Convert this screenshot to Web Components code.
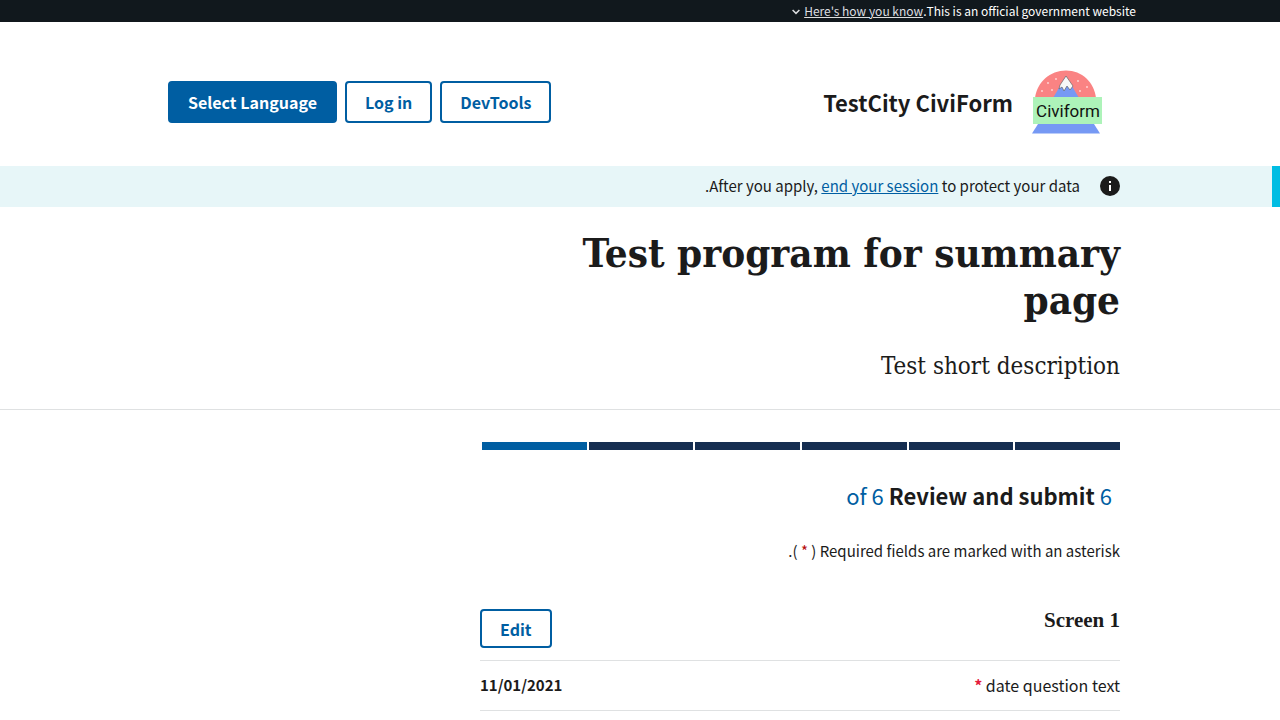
<!DOCTYPE html>
<html lang="en" dir="rtl">
<head>
<meta charset="utf-8">
<meta name="viewport" content="width=device-width, initial-scale=1">
<title>TestCity CiviForm</title>
<style>
  :root {
    --primary: #005ea2;
    --primary-darker: #162e51;
    --ink: #1b1b1b;
    --line: #dfe1e2;
    --error: #b50909;
    --serif: "DejaVu Serif Condensed", "DejaVu Serif", serif;
  }
  body {
    margin: 0;
    background: #fff;
    color: var(--ink);
    font: 15px/24px "Noto Sans CJK SC", "Noto Sans", sans-serif;
  }
</style>
</head>
<body>
<gov-banner></gov-banner>
<site-header></site-header>
<session-alert></session-alert>
<main>
  <program-title>
    <span slot="title">Test program for summary page</span>
    <span slot="description">Test short description</span>
  </program-title>
  <page-column>
    <step-indicator current="6" total="6">Review and submit</step-indicator>
    <required-note></required-note>
    <summary-section heading="Screen 1">
      <summary-answer answer="11/01/2021">date question text</summary-answer>
    </summary-section>
  </page-column>
</main>
<script>
const define = (name, markup, setup) => {
  customElements.define(name, class extends HTMLElement {
    connectedCallback() {
      if (this.shadowRoot) return;
      const template = document.createElement('template');
      template.innerHTML = markup;
      this.attachShadow({ mode: 'open' }).append(template.content.cloneNode(true));
      if (setup) setup(this, this.shadowRoot);
    }
  });
};

define('gov-banner', `
  <style>
    :host { display: block; background: #11181d; color: #fff; font-size: 12px; line-height: 22px; }
    .inner { max-width: 992px; margin: 0 auto; display: flex; }
    p { margin: 0; }
    button {
      display: flex; align-items: center; gap: 4px; padding: 0; border: 0;
      background: none; color: #dcdee0; font: inherit; cursor: pointer;
    }
    button span { text-decoration: underline; }
  </style>
  <div class="inner">
    <p>This is an official government website.</p>
    <button type="button" aria-expanded="false"><span>Here's how you know</span>
      <svg width="8" height="8" viewBox="0 0 8 8" fill="none" stroke="currentColor" stroke-width="1.5" aria-hidden="true"><path d="M.6 3 4 6.4 7.4 3"/></svg>
    </button>
  </div>`);

define('outline-button', `
  <style>
    :host { display: block; font-size: 16px; }
    button {
      display: block; box-sizing: border-box; padding: 9px 18px;
      border: 2px solid var(--primary); border-radius: 4px; background: #fff; color: var(--primary);
      font: inherit; font-weight: 700; line-height: 20px; white-space: nowrap; cursor: pointer;
    }
    :host([filled]) button { background: var(--primary); color: #fff; }
    :host([compact]) button { padding-top: 8px; padding-bottom: 7px; }
  </style>
  <button type="button"><slot></slot></button>`);

define('civiform-logo', `
  <style>:host, svg { display: block; }</style>
  <svg width="70" height="64" viewBox="0 0 70 64" role="img" aria-label="Civiform logo">
    <path d="M3 28C5 12 18 .5 34 .5S62 12 64 28z" fill="#fa8383"/>
    <path d="M21 28 34 6l13 22z" fill="#7699f4"/>
    <path d="m34 6 7 10-3 4-3-4-3 5-2-4-3 2 1-4z" fill="#f7f7f7" stroke="#555" stroke-width=".6"/>
    <g fill="#ffdada"><circle cx="24" cy="9" r=".9"/><circle cx="16" cy="13" r=".9"/><circle cx="20" cy="20" r=".9"/><circle cx="10" cy="21" r=".9"/><circle cx="46" cy="11" r=".9"/><circle cx="55" cy="17" r=".9"/><circle cx="48" cy="21" r=".9"/></g>
    <path d="M6 54h56l6 9.5H0z" fill="#7699f4"/>
    <path d="M1 27h69v27H1z" fill="#adf3b9"/>
    <text x="36" y="47" direction="ltr" text-anchor="middle" font-family="Roboto, sans-serif" font-size="17" font-weight="400" fill="#111">Civiform</text>
  </svg>`);

define('site-header', `
  <style>
    :host { display: block; }
    header {
      box-sizing: border-box; max-width: 1024px; min-height: 144px; margin: 0 auto; padding: 32px 50px 16px 40px;
      display: flex; align-items: center; justify-content: space-between;
    }
    .brand { display: flex; align-items: center; gap: 19px; color: inherit; text-decoration: none; font-size: 22px; font-weight: 700; }
    nav { display: flex; gap: 8px; }
  </style>
  <header>
    <a class="brand" href="#"><civiform-logo></civiform-logo><span>TestCity CiviForm</span></a>
    <nav aria-label="Account">
      <outline-button>DevTools</outline-button>
      <outline-button>Log in</outline-button>
      <outline-button filled>Select Language</outline-button>
    </nav>
  </header>`);

define('session-alert', `
  <style>
    :host { display: block; background: #e7f6f8; border-inline-start: 8px solid #00bde3; }
    .inner { width: 960px; max-width: 100%; padding: 8px 0 9px; margin-inline-start: calc(50vw - 488px); display: flex; align-items: center; gap: 20px; }
    p { margin: 0; }
    a { color: var(--primary); }
  </style>
  <div class="inner">
    <svg width="20" height="20" viewBox="0 0 20 20" aria-hidden="true"><circle cx="10" cy="10" r="10" fill="#1b1b1b"/><path d="M9 5h2v2H9zm0 4h2v6H9z" fill="#fff"/></svg>
    <p>After you apply, <a href="#">end your session</a> to protect your data<span>.</span></p>
  </div>`);

define('program-title', `
  <style>
    :host { display: block; border-bottom: 1px solid var(--line); padding: 22px 0 28px; }
    .inner { max-width: 960px; margin: 0 auto; font-family: var(--serif); }
    .text { max-width: 640px; }
    h1 { margin: 0; font-size: 40px; line-height: 47px; }
    p { margin: 28px 0 0; font-size: 24px; line-height: 30px; }
  </style>
  <div class="inner"><div class="text">
    <h1><slot name="title"></slot></h1>
    <p><slot name="description"></slot></p>
  </div></div>`);

define('page-column', `
  <style>
    :host { display: block; max-width: 960px; margin: 0 auto; padding-top: 32px; }
    div { max-width: 640px; }
  </style>
  <div><slot></slot></div>`);

define('step-indicator', `
  <style>
    :host { display: block; }
    ol { display: flex; margin: 0; padding: 0; list-style: none; }
    li { flex: 1; height: 8px; background: var(--primary-darker); border-inline-end: 2px solid #fff; }
    li[aria-current] { background: var(--primary); }
    h2 { margin: 31px 8px 0; font-size: 22px; line-height: 28px; }
    .count { color: var(--primary); font-weight: 400; }
  </style>
  <ol aria-label="progress"></ol>
  <h2><span class="count current"></span> <span class="count total"></span> <slot></slot></h2>`,
  (host, root) => {
    const current = Number(host.getAttribute('current'));
    const total = Number(host.getAttribute('total'));
    for (let i = 1; i <= total; i++) {
      const item = document.createElement('li');
      if (i === current) item.setAttribute('aria-current', 'step');
      root.querySelector('ol').append(item);
    }
    root.querySelector('.current').textContent = current;
    root.querySelector('.total').textContent = 'of ' + total;
  });

define('required-note', `
  <style>
    :host { display: block; margin-top: 30px; }
    p { margin: 0; }
    abbr { color: var(--error); text-decoration: none; }
  </style>
  <p>Required fields are marked with an asterisk ( <abbr title="required">*</abbr> ).</p>`);

define('summary-section', `
  <style>
    :host { display: block; margin-top: 46px; }
    .head { display: flex; justify-content: space-between; padding-bottom: 12px; border-bottom: 1px solid var(--line); }
    h3 { margin: 0; font: 700 21px/22px "Liberation Serif", serif; }
  </style>
  <section>
    <div class="head"><h3></h3><outline-button compact>Edit</outline-button></div>
    <slot></slot>
  </section>`,
  (host, root) => { root.querySelector('h3').textContent = host.getAttribute('heading'); });

define('summary-answer', `
  <style>
    :host { display: block; border-bottom: 1px solid var(--line); }
    dl { margin: 0; padding: 12px 0 13px; display: flex; justify-content: space-between; }
    dt { font-size: 16px; }
    dd { margin: 0; font-weight: 700; }
    abbr { color: #e41d3d; font-weight: 700; text-decoration: none; }
  </style>
  <dl><dt><slot></slot> <abbr title="required">*</abbr></dt><dd></dd></dl>`,
  (host, root) => { root.querySelector('dd').textContent = host.getAttribute('answer'); });
</script>
</body>
</html>
